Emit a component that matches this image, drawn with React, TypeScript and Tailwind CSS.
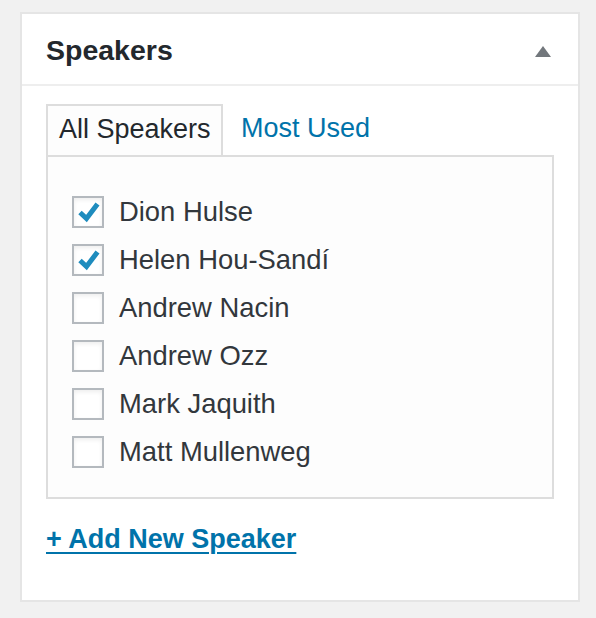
import React from "react";

const speakers: { name: string; checked: boolean }[] = [
  { name: "Dion Hulse", checked: true },
  { name: "Helen Hou-Sandí", checked: true },
  { name: "Andrew Nacin", checked: false },
  { name: "Andrew Ozz", checked: false },
  { name: "Mark Jaquith", checked: false },
  { name: "Matt Mullenweg", checked: false },
];

function Checkbox({ checked }: { checked: boolean }) {
  return (
    <div className="w-[32px] h-[32px] border-2 border-[#b4b9be] bg-white shadow-[inset_0_2px_4px_rgba(0,0,0,0.07)] relative shrink-0">
      {checked && (
        <svg
          width="28"
          height="28"
          viewBox="0 0 28 28"
          className="absolute left-0 top-0"
        >
          <polyline
            points="6,14.5 12.5,20.5 23.5,6"
            fill="none"
            stroke="#1e8cbe"
            strokeWidth="5"
            strokeLinecap="butt"
            strokeLinejoin="miter"
          />
        </svg>
      )}
    </div>
  );
}

export default function App() {
  return (
    <div
      className="w-[596px] h-[618px] bg-[#f1f1f1] pt-[12px] pl-[20px]"
      style={{ fontFamily: '"Liberation Sans", Arial, sans-serif' }}
    >
      <div className="w-[560px] h-[590px] border-2 border-[#e5e5e5] bg-white flex flex-col">
        <div className="h-[72px] shrink-0 border-b-2 border-[#eeeeee] flex items-center justify-between pl-[24px] pr-[27px]">
          <h2 className="text-[28.5px] leading-[34px] font-bold text-[#23282d] pt-[2px]">
            Speakers
          </h2>
          <svg width="16" height="11" viewBox="0 0 16 11" className="mt-[5px]">
            <polygon points="8,0 16,11 0,11" fill="#72777c" />
          </svg>
        </div>
        <div className="pt-[18px] px-[24px]">
          <div className="flex items-end">
            <div className="h-[51px] w-[177px] border-2 border-b-0 border-[#dddddd] bg-[#fdfdfd] pl-[11px] flex items-center pb-[2px] text-[27px] text-[#23282d]">
              All Speakers
            </div>
            <div className="ml-[18px] h-[51px] flex items-center pb-[2px] text-[27px] text-[#0073aa]">
              Most Used
            </div>
          </div>
          <div className="h-[344px] border-2 border-[#dddddd] bg-[#fdfdfd] pt-[31px] pl-[24px]">
            {speakers.map((s) => (
              <div key={s.name} className="h-[48px] flex items-center">
                <Checkbox checked={s.checked} />
                <span className="ml-[15px] text-[27.4px] text-[#32373c]">
                  {s.name}
                </span>
              </div>
            ))}
          </div>
          <a
            href="#"
            className="inline-block mt-[23px] text-[27px] leading-[34px] font-bold text-[#0073aa] underline decoration-2 underline-offset-[4px]"
          >
            + Add New Speaker
          </a>
        </div>
      </div>
    </div>
  );
}
